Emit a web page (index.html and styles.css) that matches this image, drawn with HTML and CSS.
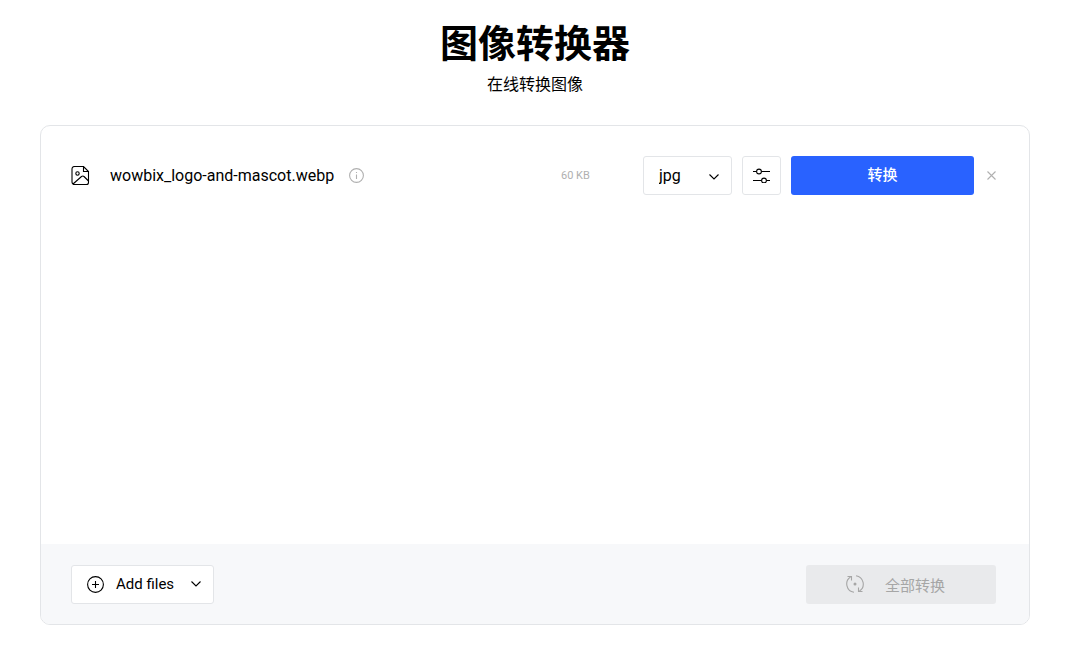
FILE: index.html
```html
<!DOCTYPE html>
<html lang="zh-CN">
<head>
<meta charset="UTF-8">
<meta name="viewport" content="width=device-width, initial-scale=1.0">
<title>图像转换器</title>
<link rel="stylesheet" href="styles.css">
</head>
<body>
<header class="header">
    <h1>图像转换器</h1>
    <p>在线转换图像</p>
</header>

<main class="converter">
    <ul class="file-list">
        <li class="file">
            <svg class="icon" width="19" height="20" viewBox="0 0 19 20">
                <path d="M12.500 .5H3.500a2.500 2.500 0 0 0-2.500 2.500v13A2.500 2.500 0 0 0 3.500 18.500h12a2 2 0 0 0 2-2V5.500L12.500 .5v5H17.500"/>
                <circle cx="6.500" cy="7.500" r="1.700"/>
                <path d="M2 18l8.500-7.500q1.500-1 2.500 0l4.500 4.500"/>
            </svg>
            <span class="file-name">wowbix_logo-and-mascot.webp</span>
            <button class="plain-btn" type="button" aria-label="信息">
                <svg class="icon" width="15" height="15" viewBox="0 0 15 15">
                    <circle cx="7.500" cy="7.500" r="6.900"/>
                    <path d="M7.500 6.500v4.500M7.500 4v1"/>
                </svg>
            </button>
            <span class="file-size">60 KB</span>
            <div class="format">
                <select class="format-select" aria-label="格式">
                    <option>jpg</option>
                    <option>png</option>
                    <option>webp</option>
                </select>
                <svg class="icon format-arrow" width="10" height="6" viewBox="0 0 10 6"><path d="M.5.5L5 5 9.500.5"/></svg>
            </div>
            <button class="settings-btn" type="button" aria-label="设置">
                <svg class="icon" width="17" height="15" viewBox="0 0 17 15">
                    <path d="M0 3.500h3.500M8.500 3.500H17M0 12.500h8.500M13.500 12.500H17"/>
                    <circle cx="6" cy="3.500" r="2.400"/>
                    <circle cx="11" cy="12.500" r="2.400"/>
                </svg>
            </button>
            <button class="convert-btn" type="button">转换</button>
            <button class="plain-btn close-btn" type="button" aria-label="删除">
                <svg class="icon" width="10" height="9" viewBox="0 0 10 9"><path d="M1.500.5l8 8M9.500.5l-8 8"/></svg>
            </button>
        </li>
    </ul>
    <footer class="actions">
        <button class="add-btn" type="button">
            <svg class="icon" width="17" height="17" viewBox="0 0 17 17">
                <circle cx="8.500" cy="8.500" r="7.900"/>
                <path d="M5 8.500h7M8.500 5v7"/>
            </svg>
            <span>Add files</span>
            <svg class="icon add-arrow" width="10" height="6" viewBox="0 0 10 6"><path d="M.5.5L5 5 9.500.5"/></svg>
        </button>
        <button class="convert-all-btn" type="button" disabled>
            <svg class="icon" width="18" height="18" viewBox="0 0 18 18">
                <path d="M8 17.300A8.400 8.400 0 0 1 4.500 2M1.500 1.500h4V5.500"/>
                <path d="M10 .7a8.400 8.400 0 0 1 3.500 15.300M16.500 16.500h-4V12.500"/>
                <circle class="icon-dot" cx="9" cy="9" r="1.500"/>
            </svg>
            <span>全部转换</span>
        </button>
    </footer>
</main>
</body>
</html>
```
FILE: styles.css
```css
* {
    box-sizing: border-box;
}

body {
    display: flex;
    flex-direction: column;
    min-height: 100vh;
    margin: 0;
    padding: 16px 53px 28px 40px;
    background-color: #fff;
    color: #000;
    font-family: Roboto, "Noto Sans CJK SC", sans-serif;
    font-size: 15px;
}

button,
select {
    margin: 0;
    padding: 0;
    border: 1px solid #e3e5e8;
    border-radius: 3px;
    background-color: #fff;
    color: #000;
    font-family: inherit;
    font-size: 15px;
    cursor: pointer;
}

.icon {
    display: block;
    flex-shrink: 0;
    fill: none;
    stroke: currentColor;
    stroke-width: 1.1;
}

.icon-dot {
    fill: currentColor;
    stroke: none;
}

.header {
    text-align: center;
}

.header h1 {
    margin: 0;
    font-size: 38px;
    font-weight: 700;
    line-height: 56px;
}

.header p {
    margin: 0;
    font-size: 16px;
    line-height: 26px;
}

.converter {
    display: flex;
    flex: 1;
    flex-direction: column;
    margin-top: 27px;
    border: 1px solid #e3e5e8;
    border-radius: 10px;
    overflow: hidden;
}

.file-list {
    flex: 1;
    margin: 0;
    padding: 30px 33px 30px 30px;
    list-style: none;
}

.file {
    display: flex;
    align-items: center;
    height: 39px;
}

.file-name {
    margin: 0 15px 0 20px;
    font-size: 16px;
}

.plain-btn {
    border: 0;
    background: none;
    color: #b0b0b0;
}

.file-size {
    width: 82px;
    margin-left: auto;
    color: #b0b0b0;
    font-size: 11px;
}

.format {
    position: relative;
    width: 89px;
    height: 39px;
}

.format-select {
    width: 100%;
    height: 100%;
    padding-left: 15px;
    font-size: 16px;
    appearance: none;
}

.format-arrow {
    position: absolute;
    top: 18px;
    right: 13px;
    pointer-events: none;
}

.settings-btn {
    display: flex;
    align-items: center;
    justify-content: center;
    width: 39px;
    height: 39px;
    margin: 0 10px;
}

.convert-btn {
    width: 183px;
    height: 39px;
    padding-bottom: 4px;
    border: 0;
    background-color: #2962ff;
    color: #fff;
    font-weight: 500;
}

.close-btn {
    margin-left: 12px;
}

.actions {
    display: flex;
    align-items: center;
    justify-content: space-between;
    height: 80px;
    padding: 0 33px 0 30px;
    background-color: #f7f8fa;
}

.add-btn {
    display: flex;
    align-items: center;
    gap: 12px;
    height: 39px;
    padding: 0 12px 0 15px;
}

.add-arrow {
    margin-left: 5px;
}

.convert-all-btn {
    display: flex;
    align-items: center;
    gap: 21px;
    width: 190px;
    height: 39px;
    padding-left: 40px;
    border: 0;
    background-color: #e9eaec;
    color: #a6a6a6;
    cursor: default;
}
```
